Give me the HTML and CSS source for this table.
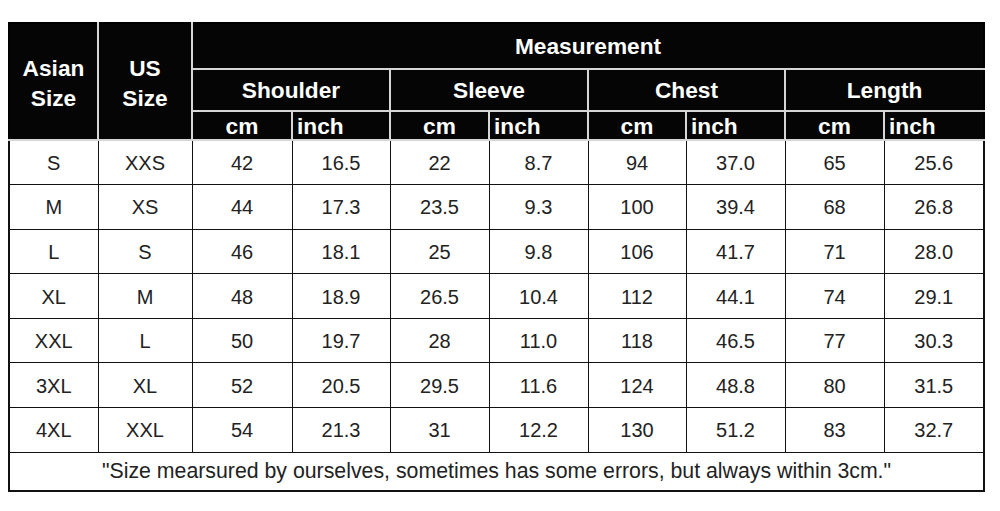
FILE: index.html
```html
<!DOCTYPE html>
<html>
<head>
<meta charset="utf-8">
<link rel="stylesheet" href="styles.css">
</head>
<body>
<table class="size-table">
  <colgroup>
    <col class="c89"><col class="c94"><col class="c100"><col class="c98"><col class="c99"><col class="c99"><col class="c98"><col class="c99"><col class="c99"><col class="c100">
  </colgroup>
  <thead>
    <tr class="h1">
      <th rowspan="3" class="first two">Asian<br>Size</th>
      <th rowspan="3" class="two">US<br>Size</th>
      <th colspan="8" class="last">Measurement</th>
    </tr>
    <tr class="h2">
      <th colspan="2">Shoulder</th>
      <th colspan="2">Sleeve</th>
      <th colspan="2">Chest</th>
      <th colspan="2" class="last">Length</th>
    </tr>
    <tr class="h3">
      <th>cm</th><th class="inch">inch</th>
      <th>cm</th><th class="inch">inch</th>
      <th>cm</th><th class="inch">inch</th>
      <th>cm</th><th class="inch last">inch</th>
    </tr>
  </thead>
  <tbody>
    <tr><td>S</td><td>XXS</td><td>42</td><td>16.5</td><td>22</td><td>8.7</td><td>94</td><td>37.0</td><td>65</td><td>25.6</td></tr>
    <tr><td>M</td><td>XS</td><td>44</td><td>17.3</td><td>23.5</td><td>9.3</td><td>100</td><td>39.4</td><td>68</td><td>26.8</td></tr>
    <tr><td>L</td><td>S</td><td>46</td><td>18.1</td><td>25</td><td>9.8</td><td>106</td><td>41.7</td><td>71</td><td>28.0</td></tr>
    <tr><td>XL</td><td>M</td><td>48</td><td>18.9</td><td>26.5</td><td>10.4</td><td>112</td><td>44.1</td><td>74</td><td>29.1</td></tr>
    <tr><td>XXL</td><td>L</td><td>50</td><td>19.7</td><td>28</td><td>11.0</td><td>118</td><td>46.5</td><td>77</td><td>30.3</td></tr>
    <tr><td>3XL</td><td>XL</td><td>52</td><td>20.5</td><td>29.5</td><td>11.6</td><td>124</td><td>48.8</td><td>80</td><td>31.5</td></tr>
    <tr><td>4XL</td><td>XXL</td><td>54</td><td>21.3</td><td>31</td><td>12.2</td><td>130</td><td>51.2</td><td>83</td><td>32.7</td></tr>
    <tr class="note"><td colspan="10">"Size mearsured by ourselves, sometimes has some errors, but always within 3cm."</td></tr>
  </tbody>
</table>
</body>
</html>
```
FILE: styles.css
```css
html, body {
  margin: 0;
  padding: 0;
  background: #fff;
}
body {
  padding: 22px 0 0 8px;
  font-family: "Liberation Sans", Arial, sans-serif;
}
.size-table {
  border-collapse: collapse;
  table-layout: fixed;
  width: 975px;
}
.c89 { width: 89px; }
.c94 { width: 94px; }
.c98 { width: 98px; }
.c99 { width: 99px; }
.c100 { width: 100px; }

.size-table th {
  background: #050505;
  color: #fff;
  font-weight: bold;
  font-size: 22.7px;
  line-height: 26px;
  padding: 0;
  text-align: center;
  vertical-align: middle;
  border: 2px solid #d6d6d6;
}
.size-table th.two {
  line-height: 30px;
  padding-top: 2px;
}
.size-table th.first { border-left-color: #000; }
.size-table th.last { border-right-color: #000; }
.size-table .h1 th { border-top-color: #000; }
.size-table th.inch {
  text-align: left;
  padding-left: 4px;
}
.h1 { height: 46px; }
.h2 { height: 42px; }
.h3 { height: 29px; }

.size-table td {
  font-size: 20px;
  color: #222;
  text-align: center;
  vertical-align: middle;
  padding: 2px 0 0;
  border: 1px solid #111;
}
.size-table tbody tr { height: 44.6px; }
.size-table td:first-child { border-left: 2px solid #111; }
.size-table td:last-child { border-right: 2px solid #111; }
.size-table tr.note { height: 39px; }
.size-table tr.note td {
  font-size: 21.3px;
  border-bottom: 2px solid #111;
  padding-top: 1px;
}
```
